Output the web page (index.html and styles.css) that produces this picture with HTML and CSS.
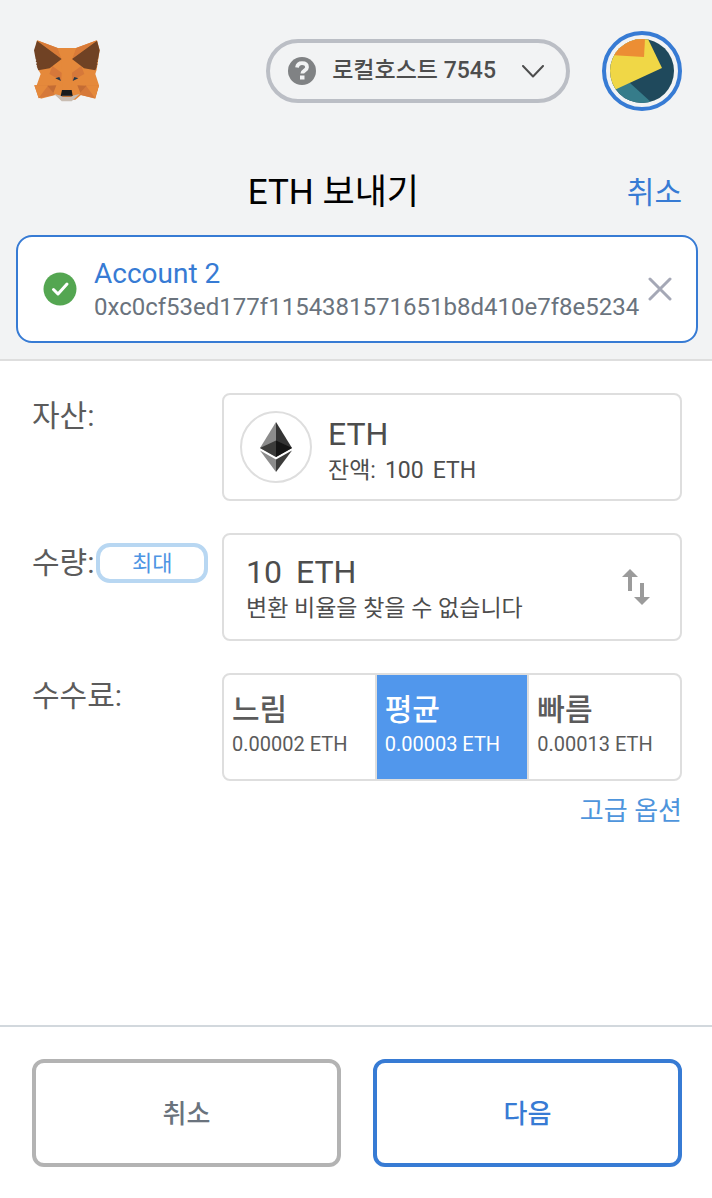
FILE: index.html
```
<!DOCTYPE html>
<html lang="ko">
<head>
<meta charset="utf-8">
<meta name="viewport" content="width=device-width, initial-scale=1">
<title>ETH 보내기</title>
<link rel="stylesheet" href="styles.css">
</head>
<body>
<div class="app">
  <div class="top">
    <header class="app-header">
      <a class="logo" href="#" aria-label="MetaMask">
        <svg width="66" height="62" viewBox="42 42 198 186" aria-hidden="true">
          <path fill="#e5893b" d="M51 43 113 66h55L231 43l8 30-9 58-4 13 11 34-11 40-43-11-17 14h-43l-17-14-44 11-12-40 12-34-7-13-9-58z"/>
          <path fill="#d97b38" d="M51 43l62 23 12 33zM231 43l-63 23-12 33z"/>
          <path fill="#d6783a" d="M97 120l28 20-1 24-36-20zM184 120l-28 20 1 24 36-20z"/>
          <path fill="#e5893b" d="M113 66h55l-12 34-3 92h-25l-3-92z"/>
          <path fill="#d6793a" d="M43 178h42l19 28-48 11zM237 178h-40l-18 28 46 11z"/>
          <path fill="#e5893b" d="M43 178h42l-29 38zM237 178h-40l28 38z"/>
          <path fill="#c46c34" d="M82 179l27-1-9 23zM199 179l-27-1 9 23z"/>
          <path fill="#704224" d="M51 44l74 55-36 28-34 6-5-12h2l-4-7 3-3-4-5 2-4-2-2-5-27zM231 44l-75 55 36 28 34 6 5-12h-2l4-7-3-3 4-5-2-4 2-2 5-27z"/>
          <path fill="#c9bdb2" d="M103 204l22 5 3 4h25l4-4 22-5-24 22h-30z"/>
          <path fill="#181b1c" d="M126 192h29l3 18H122z"/>
          <path fill="#3a3635" d="M127 207h27l3 4H124z"/>
          <path fill="#263646" d="M106 157l12-4 5 12zM175 157l-12-4-5 12z"/>
        </svg>
      </a>
      <button class="network" type="button">
        <svg width="28" height="28" viewBox="0 0 28 28" aria-hidden="true">
          <circle cx="14" cy="14" r="14" fill="#808284"/>
          <path d="M9 10.500c.5-3 2.200-4.300 5-4.300 3 0 5 1.500 5 4 0 3.500-4.700 3.300-4.700 6.300" fill="none" stroke="#f2f3f4" stroke-width="3.800"/>
          <path fill="#f2f3f4" d="M12 18.500h4.500v4H12z"/>
        </svg>
        <span class="network-name">로컬호스트 7545</span>
        <svg width="22" height="13" viewBox="0 0 22 13" aria-hidden="true"><path d="M1 1l10 10.500L21 1" fill="none" stroke="#4d4d4d" stroke-width="2" stroke-linecap="round" stroke-linejoin="round"/></svg>
      </button>
      <button class="avatar" type="button" aria-label="계정">
        <svg width="64" height="64" viewBox="0 0 64 64" aria-hidden="true">
          <path fill="#1f495c" d="M0 0h64v64H0z"/>
          <path fill="#367c8a" d="M0 45l20-1 22 20H0z"/>
          <path fill="#f0d746" d="M0 0h38l14 29L0 53z"/>
          <path fill="#ec8e34" d="M0 0h35l-1 18-34-2z"/>
        </svg>
      </button>
    </header>
    <div class="title-row">
      <h1 class="title">ETH 보내기</h1>
      <a class="title-cancel" href="#">취소</a>
    </div>
    <section class="recipient">
      <svg width="34" height="34" viewBox="0 0 34 34" aria-hidden="true"><circle cx="17" cy="17" r="16.500" fill="#54a651"/><path d="M10.500 17.500l4.500 4.500 9-10" fill="none" stroke="#fff" stroke-width="3" stroke-linecap="round" stroke-linejoin="round"/></svg>
      <div class="recipient-text">
        <div class="recipient-name">Account 2</div>
        <div class="recipient-address">0xc0cf53ed177f1154381571651b8d410e7f8e5234</div>
      </div>
      <button class="recipient-clear" type="button" aria-label="지우기">
        <svg width="24" height="24" viewBox="0 0 24 24" aria-hidden="true"><path d="M2 2l20 20M22 2L2 22" stroke="#a5a8b6" stroke-width="3" stroke-linecap="round"/></svg>
      </button>
    </section>
  </div>

  <main class="form">
    <div class="row">
      <div class="label">자산:</div>
      <button class="box asset" type="button">
        <span class="asset-icon">
          <svg width="32" height="50" viewBox="0 0 32 50" aria-hidden="true">
            <path fill="#343434" d="M16 0l16 26-16 9z"/><path fill="#8c8c8c" d="M16 0v35L0 26z"/>
            <path fill="#3c3c3b" d="M16 18.500L0 26l16 9z"/><path fill="#141414" d="M16 18.500L32 26l-16 9z"/>
            <path fill="#8c8c8c" d="M0 28.500l16 9V50z"/><path fill="#3c3c3b" d="M32 28.500l-16 9V50z"/>
          </svg>
        </span>
        <span class="lines">
          <span class="big">ETH</span>
          <span class="small balance"><span>잔액:</span> <span>100</span> <span>ETH</span></span>
        </span>
      </button>
    </div>

    <div class="row">
      <div class="label label-amount">
        <label for="amount">수량:</label>
        <button class="max" type="button">최대</button>
      </div>
      <div class="box amount">
        <div class="lines">
          <div class="big amount-line"><input class="amount-input" id="amount" type="text" inputmode="decimal" value="10"><span>ETH</span></div>
          <div class="small">변환 비율을 찾을 수 없습니다</div>
        </div>
        <button class="swap" type="button" aria-label="통화 전환">
          <svg width="28" height="36" viewBox="0 0 28 36" aria-hidden="true"><path fill="#9b9b9b" d="M0 8l8-8 8 8h-6v14H6V8zM12 28l8 8 8-8h-6V14h-4v14z"/></svg>
        </button>
      </div>
    </div>

    <div class="row">
      <div class="label">수수료:</div>
      <div class="fee">
        <div class="box fee-options">
          <button class="fee-option" type="button"><span class="fee-name">느림</span><span class="fee-value">0.00002 ETH</span></button>
          <button class="fee-option fee-selected" type="button" aria-pressed="true"><span class="fee-name">평균</span><span class="fee-value">0.00003 ETH</span></button>
          <button class="fee-option" type="button"><span class="fee-name">빠름</span><span class="fee-value">0.00013 ETH</span></button>
        </div>
        <a class="advanced" href="#">고급 옵션</a>
      </div>
    </div>
  </main>

  <footer class="footer">
    <button class="action" type="button">취소</button>
    <button class="action action-primary" type="button">다음</button>
  </footer>
</div>
</body>
</html>
```
FILE: styles.css
```
* { box-sizing: border-box; }
body {
  margin: 0;
  background: #fff;
  color: #4d4d4d;
  font-family: Roboto, "Noto Sans CJK KR", sans-serif;
  font-size: 24px;
}
button, input { font: inherit; color: inherit; margin: 0; padding: 0; border: 0; background: none; }
button { cursor: pointer; }
a { text-decoration: none; }
svg { display: block; flex: none; }

.app { display: flex; flex-direction: column; min-height: 100vh; }
.top { background: #f2f3f4; border-bottom: 2px solid #dedede; padding-bottom: 16px; }

.app-header { display: flex; align-items: center; padding: 31px 30px 0 34px; }
.logo { margin-right: auto; }
.network {
  display: flex; align-items: center;
  height: 64px; padding: 0 22px 0 18px;
  border: 4px solid #bbbec5; border-radius: 32px;
}
.network-name { margin: 0 26px 0 16px; font-size: 23px; font-weight: 500; line-height: 32px; }
.avatar { width: 80px; height: 80px; margin-left: 32px; padding: 4px; border: 4px solid #377bd4; border-radius: 50%; }
.avatar svg { border-radius: 50%; }

.title-row { display: flex; align-items: center; padding: 54px 30px 14px 40px; }
.title { flex: 1; margin: 0; color: #000; font-size: 35px; font-weight: 400; line-height: 56px; text-align: center; }
.title-cancel { color: #377bd4; font-size: 30px; line-height: 40px; }

.recipient {
  display: flex; align-items: center;
  margin: 0 14px 0 16px; padding: 16px 24px 16px 25px;
  min-height: 108px;
  background: #fff; border: 2px solid #377bd4; border-radius: 16px;
}
.recipient-text { flex: 1; min-width: 0; margin-left: 17px; padding-top: 2px; }
.recipient-name { color: #377bd4; font-size: 28px; line-height: 34px; }
.recipient-address { color: #6a737d; font-size: 24px; line-height: 32px; }
.recipient-clear { margin-left: 8px; }

.form { flex: 1; display: flex; flex-direction: column; gap: 32px; padding: 32px 30px 32px 32px; }
.row { display: grid; grid-template-columns: 190px 1fr; align-items: start; }
.label { padding-top: 5px; color: #5b5b5b; font-size: 30px; line-height: 36px; }
.label-amount { display: flex; align-items: center; padding: 10px 14px 0 0; }
.max { flex: 1; height: 40px; margin-left: 2px; padding-top: 2px; border: 4px solid #b8d7f2; border-radius: 14px; color: #4e95e3; font-size: 22px; line-height: 30px; }
.box { display: flex; align-items: center; width: 100%; height: 108px; border: 2px solid #dedede; border-radius: 8px; background: #fff; text-align: left; }
.asset { padding: 0 16px; gap: 16px; }
.asset-icon { display: flex; align-items: center; justify-content: center; width: 72px; height: 72px; border: 2px solid #dedede; border-radius: 50%; }
.lines { display: flex; flex-direction: column; padding-top: 7px; }
.big { font-size: 32px; line-height: 36px; }
.small { font-size: 23px; line-height: 38px; }
.asset .lines { padding-top: 12px; }
.balance { display: flex; gap: 9px; }
.amount { justify-content: space-between; padding: 0 30px 0 22px; }
.amount-line { display: flex; gap: 12px; }
.amount-input { width: 38px; height: 36px; }

.fee { display: flex; flex-direction: column; align-items: flex-end; }
.fee-options { align-items: stretch; overflow: hidden; }
.fee-option { flex: 1; display: flex; flex-direction: column; padding: 15px 8px; text-align: left; color: #5b5b5b; }
.fee-option + .fee-option { border-left: 2px solid #dedede; }
.fee-option.fee-selected { background: #5197ec; color: #fff; }
.fee-name { font-size: 30px; font-weight: 500; line-height: 40px; }
.fee-value { font-size: 20px; line-height: 28px; }
.advanced { margin-top: 12px; color: #4e95dc; font-size: 26px; line-height: 36px; }

.footer { display: flex; gap: 32px; padding: 32px 30px 31px 32px; border-top: 2px solid #d2d8dd; }
.action { flex: 1; height: 108px; padding-bottom: 4px; border: 4px solid #b3b3b3; border-radius: 12px; color: #6a737d; font-size: 26px; font-weight: 500; }
.action-primary { border-color: #377bd4; color: #377bd4; }
```
